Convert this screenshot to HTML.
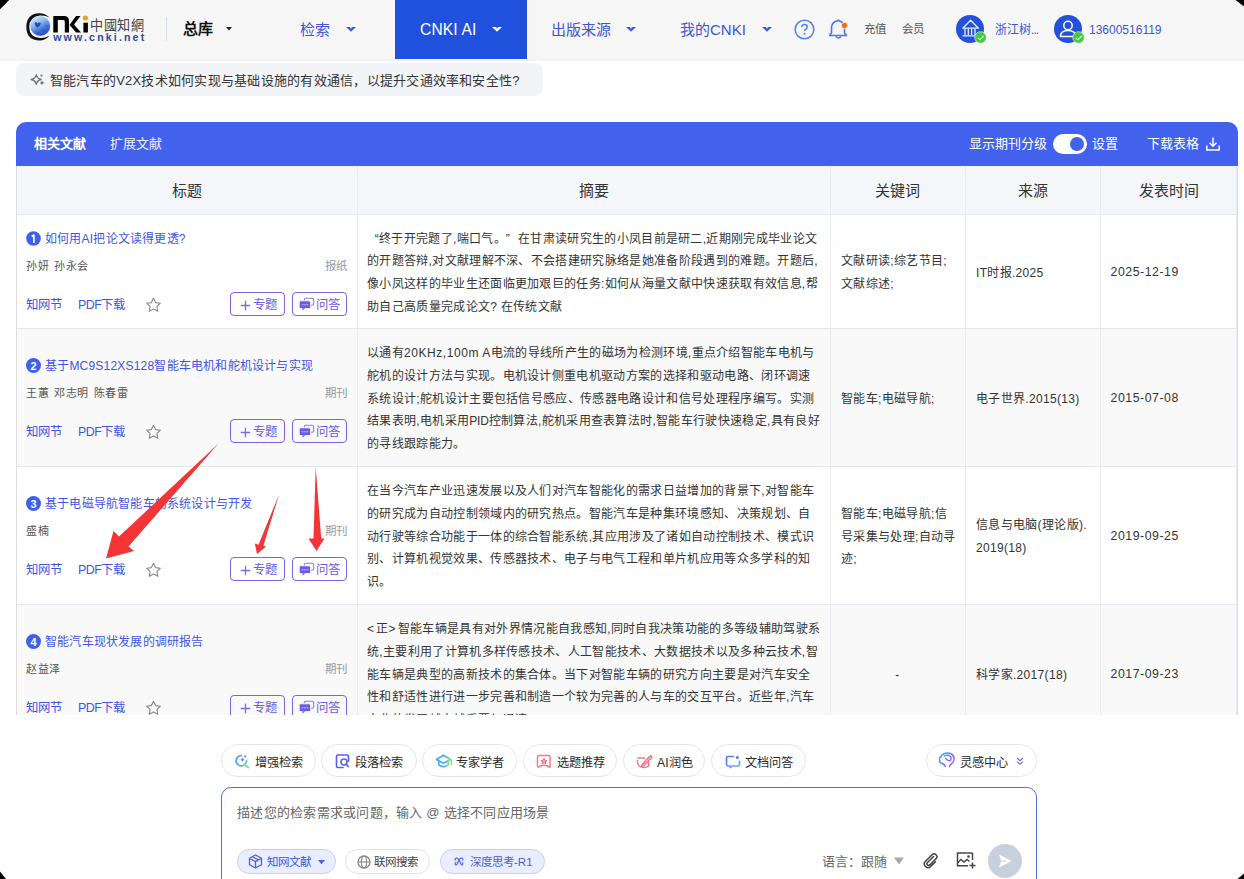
<!DOCTYPE html>
<html lang="zh-CN">
<head>
<meta charset="utf-8">
<style>
*{box-sizing:border-box;margin:0;padding:0}
html,body{width:1244px;height:879px;overflow:hidden;background:#fff}
body{position:relative;font-family:"Liberation Sans",sans-serif;color:#333}
.a{position:absolute;white-space:nowrap}
.hdr{position:absolute;left:0;top:0;width:1244px;height:59px;background:#f6f6f6;border-bottom:0}
.nav{position:absolute;top:19.5px;height:20px;line-height:20px;font-size:15px;color:#3d55d6}
.chev{position:absolute;width:10px;height:5px}
.corner{position:absolute;width:9px;height:9px}

.row{position:absolute;left:16px;width:1221px;border-bottom:1px solid #e4e7ee}
.badge{width:15px;height:15px;border-radius:50%;background:#4060ea;color:#fff;font-size:11px;font-weight:bold;line-height:16px;text-align:center;font-family:"Liberation Sans",sans-serif}
.ttl{height:20px;line-height:20px;font-size:12px;letter-spacing:0.2px;color:#4055e4}
.au{height:20px;line-height:21px;font-size:11px;letter-spacing:0.5px;word-spacing:1.5px;color:#555}
.typ{height:20px;line-height:20px;font-size:11.5px;color:#999}
.lnk{height:20px;line-height:20px;font-size:12.4px;color:#4055e4}
.btn{width:55px;height:24px;border:1px solid #7565e8;border-radius:4px;font-size:12.4px;line-height:22px;color:#6b5ce6}
.btn .pl{font-size:15px;margin-right:3px;margin-left:1px;line-height:20px}
.btn .qa{margin-right:3px;margin-left:-2px}
.abs{font-size:12px;letter-spacing:0.32px;line-height:22.7px;color:#333}
.lq{display:inline-block;width:12px;text-align:right}
.rq{display:inline-block;width:8.5px;text-align:left}
.th{position:absolute;top:167px;height:48px;line-height:48px;font-size:15px;color:#333;text-align:center}
.vl{position:absolute;top:166px;width:1px;height:560px;background:#e9ebf1}
.tool{position:absolute;top:744px;height:33px;border:1px solid #e3e6ef;border-radius:17px;background:#fff;font-size:12.2px;font-weight:500;color:#2a2a2a;line-height:31px;white-space:nowrap}
.tool svg{position:absolute;top:9px}
.tool span{position:absolute;top:2.5px}
.chip{position:absolute;top:849px;height:25px;border-radius:12.5px;font-size:11.5px;line-height:23px;white-space:nowrap}
.chip svg{position:absolute;top:5px}
.chip span{position:absolute;top:1px}
</style>
</head>
<body>
<!-- header -->
<div class="hdr"></div>
<div class="a" style="left:0;top:59px;width:1244px;height:2px;background:#f1f3f6"></div>

<!-- logo -->
<svg class="a" style="left:0;top:0" width="160" height="50" viewBox="0 0 160 50">
  <defs>
    <linearGradient id="gl" x1="0.2" y1="0" x2="0.7" y2="1">
      <stop offset="0" stop-color="#d6ecfd"/>
      <stop offset="0.35" stop-color="#8cc0ee"/>
      <stop offset="0.7" stop-color="#3f6fd8"/>
      <stop offset="1" stop-color="#2a44b8"/>
    </linearGradient>
  </defs>
  <path d="M49.5 17.5 Q45 13 39 13.2 Q26.5 13.8 26.3 27 Q26.5 40.2 39.5 40.5 Q45.5 40.5 49.5 35.5 Q45 38.2 40 38 Q29.5 37.5 29.2 27 Q29.5 17 39.5 15.5 Q45 15 49.5 17.5Z" fill="#111"/>
  <circle cx="40.2" cy="26" r="10" fill="url(#gl)"/>
  <path d="M34.6 22.6 q1.6 -1 3 0.8 q1.8 -1.6 3.4 0 q-1 2.6 -4 4.4 q-2.6 -2.2 -2.4 -5.2z" fill="#203cae" opacity="0.9"/><circle cx="44" cy="31" r="1.2" fill="#2d4fc8" opacity="0.7"/><circle cx="38" cy="33" r="1.4" fill="#2d4fc8" opacity="0.6"/><circle cx="46.5" cy="26" r="1" fill="#2d4fc8" opacity="0.6"/>
  <path d="M53.3 16 H64 Q69 16 69 21 V32.5 H64.8 V21.5 Q64.8 20 63.3 20 H57.8 V32.5 H53.3Z" fill="#000"/>
  <path d="M80.5 16 H76 L69.5 25 L76.2 32.5 H81 L74 24.5Z" fill="#000"/>
  <rect x="83.4" y="22.7" width="4.5" height="9.8" fill="#000"/>
  <circle cx="85.4" cy="18" r="2.6" fill="#f0a01a"/>
  <text x="90" y="29.5" font-family="Liberation Sans" font-size="13.6" fill="#444" textLength="54" lengthAdjust="spacingAndGlyphs">中國知網</text>
  <text x="53.2" y="41" font-family="Liberation Sans" font-weight="bold" font-size="10.6" fill="#2b4aa6" textLength="91" lengthAdjust="spacing">www.cnki.net</text>
</svg>

<div class="a" style="left:166px;top:17px;width:1px;height:24px;background:#d5def3"></div>
<div class="a" style="left:183px;top:19px;height:20px;line-height:20px;font-size:15px;font-weight:bold;color:#111">总库</div>
<svg class="a" style="left:226px;top:27px" width="6" height="4"><path d="M0 0h6l-3 3.5z" fill="#222"/></svg>

<div class="nav a" style="left:300px">检索</div>
<svg class="chev a" style="left:345.6px;top:27px" viewBox="0 0 10 5"><path d="M0 0 H4 L5 1.7 L6 0 H10 L5 4.7 Z" fill="#3d5ce0"/></svg>

<div class="a" style="left:395px;top:0;width:132px;height:59px;background:#2051dc"></div>
<div class="nav a" style="left:420px;color:#fff;font-size:15.6px;letter-spacing:0.15px">CNKI AI</div>
<svg class="chev a" style="left:491.6px;top:27px" viewBox="0 0 10 5"><path d="M0 0 H4 L5 1.7 L6 0 H10 L5 4.7 Z" fill="#fff"/></svg>

<div class="nav a" style="left:551px">出版来源</div>
<svg class="chev a" style="left:625.6px;top:27px" viewBox="0 0 10 5"><path d="M0 0 H4 L5 1.7 L6 0 H10 L5 4.7 Z" fill="#3d5ce0"/></svg>

<div class="nav a" style="left:680px">我的CNKI</div>
<svg class="chev a" style="left:761.6px;top:27px" viewBox="0 0 10 5"><path d="M0 0 H4 L5 1.7 L6 0 H10 L5 4.7 Z" fill="#3d5ce0"/></svg>

<!-- help icon -->
<svg class="a" style="left:794px;top:19px" width="21" height="21" viewBox="0 0 21 21">
  <circle cx="10.5" cy="10.5" r="9.3" fill="none" stroke="#5a82f0" stroke-width="1.6"/>
  <path d="M7.8 8.3 q0 -2.8 2.7 -2.8 q2.7 0 2.7 2.5 q0 1.6 -1.6 2.3 q-1.1 0.5 -1.1 1.8" fill="none" stroke="#5a82f0" stroke-width="1.6"/>
  <circle cx="10.5" cy="14.8" r="1" fill="#5a82f0"/>
</svg>
<!-- bell -->
<svg class="a" style="left:829px;top:19px" width="20" height="21" viewBox="0 0 20 21">
  <path d="M8.5 2 q1 -1.2 2 0 q5 1.5 5 7 v5 l2 2.5 h-17 l2 -2.5 v-5 q0 -5.5 5 -7z" fill="none" stroke="#4d74ef" stroke-width="1.6" stroke-linejoin="round"/>
  <path d="M7 17.5 q2.5 3 5 0" fill="none" stroke="#4d74ef" stroke-width="1.6"/>
  <circle cx="15.5" cy="6.5" r="3.2" fill="#f26b1d" stroke="#f5f5f5" stroke-width="0.8"/>
</svg>
<div class="a" style="left:864px;top:21px;height:16px;line-height:16px;font-size:11.5px;color:#555">充值</div>
<div class="a" style="left:902px;top:21px;height:16px;line-height:16px;font-size:11.5px;color:#555">会员</div>

<!-- avatar 1 -->
<svg class="a" style="left:956px;top:15px" width="32" height="30" viewBox="0 0 32 30">
  <circle cx="14" cy="14" r="14" fill="#2451dc"/>
  <path d="M6.8 13.2 L14.6 5.2 L22.4 13.2 Z" fill="none" stroke="#e8eeff" stroke-width="1.3" stroke-linejoin="round"/>
  <path d="M9 13.5v6.5M12.3 13.5v6.5M15.6 13.5v6.5M19 13.5v6.5M6.5 20.8h14.5" stroke="#e8eeff" stroke-width="1.3"/>
  <circle cx="24.5" cy="22.5" r="5.8" fill="#45c83f" stroke="#f6f6f6" stroke-width="0.6"/>
  <path d="M21.8 22.8 l2.2 2 l3.6 -3.8" fill="none" stroke="#e8ffe8" stroke-width="1.1"/>
</svg>
<div class="a" style="left:995px;top:22px;height:16px;line-height:16px;font-size:12px;color:#3e55d2">浙江树<span style="letter-spacing:-0.9px">...</span></div>
<!-- avatar 2 -->
<svg class="a" style="left:1054px;top:15px" width="32" height="30" viewBox="0 0 32 30">
  <circle cx="14" cy="14" r="14" fill="#2451dc"/>
  <circle cx="14" cy="10.5" r="4.2" fill="none" stroke="#fff" stroke-width="1.5"/>
  <path d="M6.5 21.5 q0 -6 7.5 -6 q7.5 0 7.5 6z" fill="none" stroke="#fff" stroke-width="1.5" stroke-linejoin="round"/>
  <circle cx="24.5" cy="22.5" r="5.8" fill="#45c83f" stroke="#f6f6f6" stroke-width="0.6"/>
  <path d="M21.8 22.8 l2.2 2 l3.6 -3.8" fill="none" stroke="#e8ffe8" stroke-width="1.1"/>
</svg>
<div class="a" style="left:1089px;top:22px;height:16px;line-height:16px;font-size:12px;color:#3e55d2">13600516119</div>


<!-- query bubble -->
<div class="a" style="left:16px;top:63px;width:527px;height:33px;background:#f3f4f8;border-radius:8px"></div>
<svg class="a" style="left:26px;top:68px" width="24" height="22" viewBox="0 0 24 22">
  <path d="M10.26 6.6 Q11.1 10.7 15.3 11.5 Q11.1 12.3 10.26 16.4 Q9.4 12.3 5.2 11.5 Q9.4 10.7 10.26 6.6Z" fill="none" stroke="#6f7378" stroke-width="1.3" stroke-linejoin="round"/>
  <circle cx="15.4" cy="7.6" r="1.15" fill="#777"/><circle cx="16" cy="14.8" r="1.6" fill="#777"/>
</svg>
<div class="a" style="left:50px;top:70.5px;height:20px;line-height:20px;font-size:13px;letter-spacing:0.24px;color:#333">智能汽车的V2X技术如何实现与基础设施的有效通信，以提升交通效率和安全性?</div>

<!-- table -->
<div class="a" style="left:0;top:0;width:1244px;height:715px;overflow:hidden">
<div class="a" style="left:16px;top:122px;width:1222px;height:44px;background:#4262ee;border-radius:10px 10px 0 0"></div>
<div class="a" style="left:34px;top:134px;height:20px;line-height:20px;font-size:13px;font-weight:bold;color:#fff">相关文献</div>
<div class="a" style="left:110px;top:134px;height:20px;line-height:20px;font-size:13px;color:#eef">扩展文献</div>
<div class="a" style="left:969px;top:134px;height:20px;line-height:20px;font-size:13px;color:#fff">显示期刊分级</div>
<div class="a" style="left:1053px;top:134px;width:34px;height:20px;border-radius:10px;background:#fff"></div>
<div class="a" style="left:1070px;top:137px;width:14px;height:14px;border-radius:50%;background:#4262ee"></div>
<div class="a" style="left:1092px;top:134px;height:20px;line-height:20px;font-size:13px;color:#fff">设置</div>
<div class="a" style="left:1147px;top:134px;height:20px;line-height:20px;font-size:13px;color:#fff">下载表格</div>
<svg class="a" style="left:1205px;top:136px" width="16" height="16" viewBox="0 0 16 16">
  <path d="M8 1.5 v8.5 M4.5 6.8 L8 10.2 L11.5 6.8" fill="none" stroke="#fff" stroke-width="1.5"/>
  <path d="M1.8 9.5 v4.5 h12.4 v-4.5" fill="none" stroke="#fff" stroke-width="1.5"/>
</svg>
<div class="a" style="left:16px;top:166px;width:1222px;height:49px;background:#f4f6fa;border-bottom:1px solid #e4e7ee"></div>
<div class="th" style="left:16px;width:341px">标题</div>
<div class="th" style="left:357px;width:473px">摘要</div>
<div class="th" style="left:830px;width:135px">关键词</div>
<div class="th" style="left:965px;width:135px">来源</div>
<div class="th" style="left:1100px;width:138px">发表时间</div>
<div class="row" style="top:215px;height:114px;background:#fff"></div>
<svg class="a" style="left:26px;top:231px" width="15" height="15" viewBox="0 0 15 15"><circle cx="7.5" cy="7.5" r="7.3" fill="#4060ea"/><path d="M5.7 5.5 L7.9 4 V11.9" fill="none" stroke="#fff" stroke-width="1.6" stroke-linejoin="round"/></svg>
<div class="ttl a" style="left:45px;top:229.0px">如何用AI把论文读得更透?</div>
<div class="au a" style="left:26px;top:256.0px">孙妍 孙永会</div>
<div class="typ a" style="right:897px;top:256.0px">报纸</div>
<div class="lnk a" style="left:26px;top:295.2px">知网节</div>
<div class="lnk a" style="left:78px;top:295.2px;letter-spacing:-0.5px">PDF下载</div>
<svg class="a star" style="left:145px;top:297.0px" width="17" height="16" viewBox="0 0 17 16"><path d="M8.5 1.2 L10.6 5.6 L15.4 6.2 L11.9 9.5 L12.8 14.3 L8.5 12 L4.2 14.3 L5.1 9.5 L1.6 6.2 L6.4 5.6 Z" fill="none" stroke="#8a8a8a" stroke-width="1.1" stroke-linejoin="round"/></svg>
<div class="btn a" style="left:230px;top:292.3px"><svg style="position:absolute;left:8.5px;top:6.5px" width="11" height="11" viewBox="0 0 11 11"><path d="M5.5 0.8 V10.2 M0.8 5.5 H10.2" stroke="#7a6be8" stroke-width="1.3"/></svg><span style="position:absolute;left:22px;top:0.5px">专题</span></div>
<div class="btn a" style="left:292px;top:292.3px"><svg style="position:absolute;left:5px;top:3.7px" width="17" height="15" viewBox="0 0 17 15"><rect x="6.3" y="1.2" width="9.4" height="7" rx="1.5" fill="none" stroke="#8a7cf0" stroke-width="1.1"/><rect x="1.2" y="3.8" width="11.4" height="7.8" rx="1.4" fill="#6b5ce6" stroke="#fff" stroke-width="0.9"/><path d="M4.2 11.2 L4.8 13.6 L7.2 11.2Z" fill="#6b5ce6"/><rect x="3.8" y="7.2" width="1.6" height="1.1" fill="#cfc8ff"/><rect x="6.2" y="7.2" width="1.6" height="1.1" fill="#cfc8ff"/><rect x="8.6" y="7.2" width="1.6" height="1.1" fill="#cfc8ff"/></svg><span style="position:absolute;left:22.5px;top:0.5px">问答</span></div>
<div class="abs a" style="left:367px;top:227.6px"><span class="lq">“</span>终于开完题了,喘口气。<span class="rq">”</span> 在甘肃读研究生的小凤目前是研二,近期刚完成毕业论文<br>的开题答辩,对文献理解不深、不会搭建研究脉络是她准备阶段遇到的难题。开题后,<br>像小凤这样的毕业生还面临更加艰巨的任务:如何从海量文献中快速获取有效信息,帮<br>助自己高质量完成论文? 在传统文献</div>
<div class="abs a" style="left:841px;top:250.3px">文献研读;综艺节目;<br>文献综述;</div>
<div class="abs a" style="left:976px;top:261.6px">IT时报.2025</div>
<div class="abs a" style="left:1110.5px;top:260.6px;letter-spacing:0.55px;font-size:12.3px">2025-12-19</div>
<div class="row" style="top:329px;height:138px;background:#f9f9f9"></div>
<div class="badge a" style="left:26px;top:358.2px">2</div>
<div class="ttl a" style="left:45px;top:355.7px">基于MC9S12XS128智能车电机和舵机设计与实现</div>
<div class="au a" style="left:26px;top:382.7px">王蕙 邓志明 陈春雷</div>
<div class="typ a" style="right:897px;top:382.7px">期刊</div>
<div class="lnk a" style="left:26px;top:421.9px">知网节</div>
<div class="lnk a" style="left:78px;top:421.9px;letter-spacing:-0.5px">PDF下载</div>
<svg class="a star" style="left:145px;top:423.7px" width="17" height="16" viewBox="0 0 17 16"><path d="M8.5 1.2 L10.6 5.6 L15.4 6.2 L11.9 9.5 L12.8 14.3 L8.5 12 L4.2 14.3 L5.1 9.5 L1.6 6.2 L6.4 5.6 Z" fill="none" stroke="#8a8a8a" stroke-width="1.1" stroke-linejoin="round"/></svg>
<div class="btn a" style="left:230px;top:419.0px"><svg style="position:absolute;left:8.5px;top:6.5px" width="11" height="11" viewBox="0 0 11 11"><path d="M5.5 0.8 V10.2 M0.8 5.5 H10.2" stroke="#7a6be8" stroke-width="1.3"/></svg><span style="position:absolute;left:22px;top:0.5px">专题</span></div>
<div class="btn a" style="left:292px;top:419.0px"><svg style="position:absolute;left:5px;top:3.7px" width="17" height="15" viewBox="0 0 17 15"><rect x="6.3" y="1.2" width="9.4" height="7" rx="1.5" fill="none" stroke="#8a7cf0" stroke-width="1.1"/><rect x="1.2" y="3.8" width="11.4" height="7.8" rx="1.4" fill="#6b5ce6" stroke="#fff" stroke-width="0.9"/><path d="M4.2 11.2 L4.8 13.6 L7.2 11.2Z" fill="#6b5ce6"/><rect x="3.8" y="7.2" width="1.6" height="1.1" fill="#cfc8ff"/><rect x="6.2" y="7.2" width="1.6" height="1.1" fill="#cfc8ff"/><rect x="8.6" y="7.2" width="1.6" height="1.1" fill="#cfc8ff"/></svg><span style="position:absolute;left:22.5px;top:0.5px">问答</span></div>
<div class="abs a" style="left:367px;top:342.2px">以通有<span style="letter-spacing:0.56px">20KHz,100m A</span>电流的导线所产生的磁场为检测环境,重点介绍智能车电机与<br>舵机的设计方法与实现。电机设计侧重电机驱动方案的选择和驱动电路、闭环调速<br>系统设计;舵机设计主要包括信号感应、传感器电路设计和信号处理程序编写。实测<br>结果表明,电机采用<span style="letter-spacing:-0.2px">PID</span>控制算法,舵机采用查表算法时,智能车行驶快速稳定,具有良好<br>的寻线跟踪能力。</div>
<div class="abs a" style="left:841px;top:387.6px">智能车;电磁导航;</div>
<div class="abs a" style="left:976px;top:387.6px">电子世界.2015(13)</div>
<div class="abs a" style="left:1110.5px;top:386.6px;letter-spacing:0.55px;font-size:12.3px">2015-07-08</div>
<div class="row" style="top:467px;height:138px;background:#fff"></div>
<div class="badge a" style="left:26px;top:496.2px">3</div>
<div class="ttl a" style="left:45px;top:493.7px">基于电磁导航智能车的系统设计与开发</div>
<div class="au a" style="left:26px;top:520.7px">盛楠</div>
<div class="typ a" style="right:897px;top:520.7px">期刊</div>
<div class="lnk a" style="left:26px;top:559.9px">知网节</div>
<div class="lnk a" style="left:78px;top:559.9px;letter-spacing:-0.5px">PDF下载</div>
<svg class="a star" style="left:145px;top:561.7px" width="17" height="16" viewBox="0 0 17 16"><path d="M8.5 1.2 L10.6 5.6 L15.4 6.2 L11.9 9.5 L12.8 14.3 L8.5 12 L4.2 14.3 L5.1 9.5 L1.6 6.2 L6.4 5.6 Z" fill="none" stroke="#8a8a8a" stroke-width="1.1" stroke-linejoin="round"/></svg>
<div class="btn a" style="left:230px;top:557.0px"><svg style="position:absolute;left:8.5px;top:6.5px" width="11" height="11" viewBox="0 0 11 11"><path d="M5.5 0.8 V10.2 M0.8 5.5 H10.2" stroke="#7a6be8" stroke-width="1.3"/></svg><span style="position:absolute;left:22px;top:0.5px">专题</span></div>
<div class="btn a" style="left:292px;top:557.0px"><svg style="position:absolute;left:5px;top:3.7px" width="17" height="15" viewBox="0 0 17 15"><rect x="6.3" y="1.2" width="9.4" height="7" rx="1.5" fill="none" stroke="#8a7cf0" stroke-width="1.1"/><rect x="1.2" y="3.8" width="11.4" height="7.8" rx="1.4" fill="#6b5ce6" stroke="#fff" stroke-width="0.9"/><path d="M4.2 11.2 L4.8 13.6 L7.2 11.2Z" fill="#6b5ce6"/><rect x="3.8" y="7.2" width="1.6" height="1.1" fill="#cfc8ff"/><rect x="6.2" y="7.2" width="1.6" height="1.1" fill="#cfc8ff"/><rect x="8.6" y="7.2" width="1.6" height="1.1" fill="#cfc8ff"/></svg><span style="position:absolute;left:22.5px;top:0.5px">问答</span></div>
<div class="abs a" style="left:367px;top:480.2px">在当今汽车产业迅速发展以及人们对汽车智能化的需求日益增加的背景下,对智能车<br>的研究成为自动控制领域内的研究热点。智能汽车是种集环境感知、决策规划、自<br>动行驶等综合功能于一体的综合智能系统,其应用涉及了诸如自动控制技术、模式识<br>别、计算机视觉效果、传感器技术、电子与电气工程和单片机应用等众多学科的知<br>识。</div>
<div class="abs a" style="left:841px;top:502.9px">智能车;电磁导航;信<br>号采集与处理;自动寻<br>迹;</div>
<div class="abs a" style="left:976px;top:514.3px">信息与电脑(理论版).<br>2019(18)</div>
<div class="abs a" style="left:1110.5px;top:524.6px;letter-spacing:0.55px;font-size:12.3px">2019-09-25</div>
<div class="row" style="top:605px;height:138px;background:#f9f9f9"></div>
<div class="badge a" style="left:26px;top:634.2px">4</div>
<div class="ttl a" style="left:45px;top:631.7px">智能汽车现状发展的调研报告</div>
<div class="au a" style="left:26px;top:658.7px">赵益泽</div>
<div class="typ a" style="right:897px;top:658.7px">期刊</div>
<div class="lnk a" style="left:26px;top:697.9px">知网节</div>
<div class="lnk a" style="left:78px;top:697.9px;letter-spacing:-0.5px">PDF下载</div>
<svg class="a star" style="left:145px;top:699.7px" width="17" height="16" viewBox="0 0 17 16"><path d="M8.5 1.2 L10.6 5.6 L15.4 6.2 L11.9 9.5 L12.8 14.3 L8.5 12 L4.2 14.3 L5.1 9.5 L1.6 6.2 L6.4 5.6 Z" fill="none" stroke="#8a8a8a" stroke-width="1.1" stroke-linejoin="round"/></svg>
<div class="btn a" style="left:230px;top:695.0px"><svg style="position:absolute;left:8.5px;top:6.5px" width="11" height="11" viewBox="0 0 11 11"><path d="M5.5 0.8 V10.2 M0.8 5.5 H10.2" stroke="#7a6be8" stroke-width="1.3"/></svg><span style="position:absolute;left:22px;top:0.5px">专题</span></div>
<div class="btn a" style="left:292px;top:695.0px"><svg style="position:absolute;left:5px;top:3.7px" width="17" height="15" viewBox="0 0 17 15"><rect x="6.3" y="1.2" width="9.4" height="7" rx="1.5" fill="none" stroke="#8a7cf0" stroke-width="1.1"/><rect x="1.2" y="3.8" width="11.4" height="7.8" rx="1.4" fill="#6b5ce6" stroke="#fff" stroke-width="0.9"/><path d="M4.2 11.2 L4.8 13.6 L7.2 11.2Z" fill="#6b5ce6"/><rect x="3.8" y="7.2" width="1.6" height="1.1" fill="#cfc8ff"/><rect x="6.2" y="7.2" width="1.6" height="1.1" fill="#cfc8ff"/><rect x="8.6" y="7.2" width="1.6" height="1.1" fill="#cfc8ff"/></svg><span style="position:absolute;left:22.5px;top:0.5px">问答</span></div>
<div class="abs a" style="left:367px;top:618.2px"><span style="letter-spacing:2.2px">&lt;</span>正<span style="letter-spacing:2.2px">&gt;</span>智能车辆是具有对外界情况能自我感知,同时自我决策功能的多等级辅助驾驶系<br>统,主要利用了计算机多样传感技术、人工智能技术、大数据技术以及多种云技术,智<br>能车辆是典型的高新技术的集合体。当下对智能车辆的研究方向主要是对汽车安全<br>性和舒适性进行进一步完善和制造一个较为完善的人与车的交互平台。近些年,汽车<br>产业的发展越来越重要与迅速</div>
<div class="abs a" style="left:830px;width:135px;text-align:center;top:663.6px">-</div>
<div class="abs a" style="left:976px;top:663.6px">科学家.2017(18)</div>
<div class="abs a" style="left:1110.5px;top:662.6px;letter-spacing:0.55px;font-size:12.3px">2017-09-23</div>
<div class="vl" style="left:357px"></div>
<div class="vl" style="left:830px"></div>
<div class="vl" style="left:965px"></div>
<div class="vl" style="left:1100px"></div>
<div class="vl" style="left:1236px;background:#e6eaf4"></div>
<div class="a" style="left:16px;top:166px;width:1px;height:560px;background:#dedede"></div>
<div class="a" style="left:1237px;top:166px;width:1px;height:560px;background:#dedede"></div>
</div>


<!-- bottom tools -->
<div class="tool" style="left:221px;width:95px">
  <svg style="left:9px;top:6px" width="24" height="22" viewBox="0 0 24 22">
    <defs><linearGradient id="g1" x1="0" y1="0" x2="1" y2="1"><stop offset="0" stop-color="#4f9cf5"/><stop offset="0.7" stop-color="#5ab0f0"/><stop offset="1" stop-color="#7ee08a"/></linearGradient></defs>
    <path d="M10.3 4.6 A5.2 5.2 0 1 0 15.5 9.8" fill="none" stroke="url(#g1)" stroke-width="1.8" stroke-linecap="round"/>
    <path d="M14.3 14.3 L17.3 16.6" stroke="#7edc8e" stroke-width="1.9" stroke-linecap="round"/>
    <path d="M11.5 6.5 Q11.9 8.4 13.6 8.8 Q11.9 9.2 11.5 11.1 Q11.1 9.2 9.4 8.8 Q11.1 8.4 11.5 6.5Z" fill="#3f8ef2"/>
    <circle cx="14.2" cy="5.3" r="1.15" fill="#4f9cf5"/>
  </svg>
  <span style="left:33px">增强检索</span>
</div>
<div class="tool" style="left:321px;width:96px">
  <svg style="left:9px;top:6px" width="24" height="22" viewBox="0 0 24 22">
    <path d="M12 16.5 H7 Q5.5 16.5 5.5 15 V5.5 Q5.5 4 7 4 H16 Q17.5 4 17.5 5.5 V10.3" fill="none" stroke="#5563ee" stroke-width="1.6" stroke-linecap="round"/>
    <circle cx="13" cy="11" r="3" fill="none" stroke="#5563ee" stroke-width="1.6"/>
    <path d="M15.2 13.3 L17.2 15.6" stroke="#5e5cea" stroke-width="1.6" stroke-linecap="round"/>
  </svg>
  <span style="left:33px">段落检索</span>
</div>
<div class="tool" style="left:422px;width:95px">
  <svg style="left:10px;top:6px" width="24" height="22" viewBox="0 0 24 22">
    <defs><linearGradient id="g3" x1="0" y1="0" x2="1" y2="0"><stop offset="0" stop-color="#45a6f5"/><stop offset="0.6" stop-color="#4aa8ee"/><stop offset="1" stop-color="#7fdc8a"/></linearGradient></defs>
    <path d="M10.5 4.3 L17.6 8.5 L10.5 12.2 L3.4 8.5 Z" fill="none" stroke="url(#g3)" stroke-width="1.6" stroke-linejoin="round"/>
    <path d="M5.8 10.3 V13.8 Q10.5 17.6 15.2 13.8 V10.6" fill="none" stroke="url(#g3)" stroke-width="1.6" stroke-linejoin="round"/>
    <path d="M18.3 9 V13.5" stroke="#7fdc8a" stroke-width="1.5" stroke-linecap="round"/>
  </svg>
  <span style="left:33px">专家学者</span>
</div>
<div class="tool" style="left:523px;width:94px">
  <svg style="left:9px;top:6px" width="24" height="22" viewBox="0 0 24 22">
    <path d="M5.5 4.5 H16 Q17 4.5 17 5.5 V16.2 L14.5 15 Q11 13.4 7.5 15 L5.5 16.2 Q4.5 16.2 4.5 15.2 V5.5 Q4.5 4.5 5.5 4.5Z" fill="none" stroke="#f47d8c" stroke-width="1.5" stroke-linejoin="round"/>
    <path d="M11 7.6 L11.8 9.3 L13.6 9.5 L12.3 10.7 L12.6 12.5 L11 11.6 L9.4 12.5 L9.7 10.7 L8.4 9.5 L10.2 9.3Z" fill="none" stroke="#f36d82" stroke-width="1.2" stroke-linejoin="round"/>
  </svg>
  <span style="left:33px">选题推荐</span>
</div>
<div class="tool" style="left:623px;width:82px">
  <svg style="left:7px;top:6px" width="24" height="22" viewBox="0 0 24 22">
    <defs><linearGradient id="g5" x1="0" y1="1" x2="1" y2="0"><stop offset="0" stop-color="#f27fa8"/><stop offset="1" stop-color="#f56a76"/></linearGradient></defs>
    <path d="M6.5 9.5 Q6 15.8 12 16.5 Q15.8 16.9 17.5 15 V10.5" fill="none" stroke="url(#g5)" stroke-width="1.5" stroke-linecap="round"/>
    <path d="M6.8 7 H13.8" fill="none" stroke="#f47a8a" stroke-width="1.5" stroke-linecap="round"/>
    <path d="M11.2 13.5 L18.8 5.2 Q19.7 4.3 20.4 5 Q21.1 5.8 20.2 6.7 L12.6 14.8 L10.6 15.4Z" fill="none" stroke="#f47080" stroke-width="1.4" stroke-linejoin="round"/>
  </svg>
  <span style="left:33px">AI润色</span>
</div>
<div class="tool" style="left:711px;width:95px">
  <svg style="left:9px;top:6px" width="24" height="22" viewBox="0 0 24 22">
    <defs><linearGradient id="g6" x1="0" y1="0" x2="1" y2="1"><stop offset="0" stop-color="#5576f2"/><stop offset="1" stop-color="#62b6f6"/></linearGradient></defs>
    <path d="M12.3 5.5 H7 Q5.5 5.5 5.5 7 V13.5 Q5.5 15 7 15 H8.5 L9.5 16.5 L11 15 H17 Q18.5 15 18.5 13.5 V10.3" fill="none" stroke="url(#g6)" stroke-width="1.7" stroke-linecap="round" stroke-linejoin="round"/>
    <circle cx="16.4" cy="6.5" r="1.5" fill="#4f7cf2"/>
  </svg>
  <span style="left:33px">文档问答</span>
</div>
<div class="tool" style="left:926px;width:111px">
  <svg style="left:9px;top:5px" width="22" height="22" viewBox="0 0 22 22">
    <defs><linearGradient id="g7" x1="0" y1="0" x2="1" y2="1"><stop offset="0" stop-color="#3fb0f8"/><stop offset="0.55" stop-color="#7f72f2"/><stop offset="1" stop-color="#c65ae8"/></linearGradient></defs>
    <path d="M9.2 16.3 Q8.5 13.8 5.5 13.2 Q3.6 12.9 3.8 11.2 L3.5 8.8 Q3.4 7.6 4.6 7.2 Q5.3 4.6 8.2 3.6 Q12 2.6 15 3.8 Q18.2 5.4 18 9.5 Q17.7 12.2 15.6 13.6 Q13.6 15 13.6 16.6" fill="none" stroke="url(#g7)" stroke-width="1.6" stroke-linecap="round" stroke-linejoin="round"/>
    <path d="M8.2 6 Q11 4.6 14 6.2 Q15.8 7.5 15 9.5 Q14 11 12.3 10.6 Q10.5 10.2 9.5 8.2" fill="none" stroke="url(#g7)" stroke-width="1.5" stroke-linecap="round"/>
  </svg>
  <span style="left:33px">灵感中心</span>
  <svg style="left:89px;top:12px" width="8" height="9" viewBox="0 0 8 9">
    <path d="M1 1 L4 3.6 L7 1 M1 4.6 L4 7.2 L7 4.6" fill="none" stroke="#6672c8" stroke-width="1.2"/>
  </svg>
</div>

<!-- input box -->
<div class="a" style="left:221px;top:787px;width:816px;height:120px;border:1px solid #4f6ff0;border-radius:10px;background:#fff"></div>
<div class="a" style="left:237px;top:803px;height:20px;line-height:20px;font-size:13px;letter-spacing:0.25px;color:#666">描述您的检索需求或问题，输入 @ 选择不同应用场景</div>

<div class="chip" style="left:237px;width:99px;background:#e9edfd;border:1px solid #c4cff6;color:#3f55d8">
  <svg style="left:10px;top:4px" width="15" height="15" viewBox="0 0 15 15">
    <path d="M7.5 1 L13.5 4.3 V10.7 L7.5 14 L1.5 10.7 V4.3 Z M1.5 4.3 L7.5 7.6 L13.5 4.3 M7.5 7.6 V14 M4.5 2.6 L10.5 6" fill="none" stroke="#4a62e0" stroke-width="1.3" stroke-linejoin="round"/>
  </svg>
  <span style="left:29px">知网文献</span>
  <svg style="left:80px;top:10px" width="7" height="5" viewBox="0 0 7 5"><path d="M0 0 H7 L3.5 4.2Z" fill="#4a62e0"/></svg>
</div>
<div class="chip" style="left:345px;width:85px;background:#fff;border:1px solid #dfe2ea;color:#444">
  <svg style="left:11px;top:5px" width="14" height="14" viewBox="0 0 14 14">
    <circle cx="7" cy="7" r="6" fill="none" stroke="#888" stroke-width="1.3"/>
    <path d="M1 7 H13" fill="none" stroke="#888" stroke-width="1.1"/><ellipse cx="7" cy="7" rx="2.6" ry="6" fill="none" stroke="#888" stroke-width="1.1"/>
  </svg>
  <span style="left:28px">联网搜索</span>
</div>
<div class="chip" style="left:440px;width:105px;background:#e9edfd;border:1px solid #c4cff6;color:#4a5fd8">
  <svg style="left:12px;top:6px" width="12" height="12" viewBox="0 0 12 12">
    <path d="M2.2 4 Q2 1.6 4.2 2.2 Q5.6 2.8 6.6 5 L7.6 7.5 Q8.6 9.6 9.6 8.6 Q10.4 7.6 9.2 6.6" fill="none" stroke="#5670e6" stroke-width="1.3" stroke-linecap="round"/>
    <path d="M9.8 4 Q10 1.6 7.8 2.2 Q6.4 2.8 5.4 5 L4.4 7.5 Q3.4 9.6 2.4 8.6 Q1.6 7.6 2.8 6.6" fill="none" stroke="#5670e6" stroke-width="1.3" stroke-linecap="round"/>
  </svg>
  <span style="left:29px">深度思考-R1</span>
</div>

<div class="a" style="left:822px;top:852px;height:20px;line-height:20px;font-size:13px;color:#666">语言：跟随</div>
<svg class="a" style="left:894px;top:857px" width="10" height="8" viewBox="0 0 10 8"><path d="M0 0.5 H10 L5 7.5Z" fill="#aaa"/></svg>
<svg class="a" style="left:922px;top:852px" width="17" height="17" viewBox="0 0 17 17">
  <path d="M11.5 4.5 L5.5 10.5 Q4.3 11.7 5.5 12.9 Q6.7 14.1 7.9 12.9 L14 6.8 Q16 4.8 14 2.8 Q12 0.8 10 2.8 L3.5 9.3 Q0.9 11.9 3.5 14.5 Q6.1 17.1 8.7 14.5 L13.5 9.7" fill="none" stroke="#444" stroke-width="1.5" stroke-linecap="round"/>
</svg>
<svg class="a" style="left:956px;top:852px" width="20" height="17" viewBox="0 0 20 17">
  <path d="M10.5 1 H1.5 V13.8 H12" fill="none" stroke="#444" stroke-width="1.5"/>
  <path d="M16.5 1 V8" fill="none" stroke="#444" stroke-width="1.5"/>
  <path d="M10.5 1 H16.5" fill="none" stroke="#444" stroke-width="1.5"/>
  <path d="M1.5 11 L5 7.5 L8 10 L11 7.5 L13.5 9.5" fill="none" stroke="#444" stroke-width="1.4"/>
  <circle cx="12.5" cy="4.5" r="1.3" fill="#444"/>
  <path d="M16.5 10.5 V16.5 M13.5 13.5 H19.5" stroke="#444" stroke-width="1.5"/>
</svg>
<div class="a" style="left:988px;top:844px;width:34px;height:34px;border-radius:50%;background:#c9d0dd"></div>
<svg class="a" style="left:996px;top:852px" width="18" height="18" viewBox="0 0 18 18">
  <path d="M3 2.5 L15.5 9 L3 15.5 L5.3 9 Z" fill="#fff"/>
  <path d="M5.3 9 H10" stroke="#c9d0dd" stroke-width="1.2"/>
</svg>

<!-- red arrows -->
<svg class="a" style="left:0;top:0" width="1244" height="879" viewBox="0 0 1244 879">
  <path d="M218.5 443.5 L128.5 546.5 L134 551 L106 558.5 L113.5 531 L119 536.5 Z" fill="#f43535"/>
  <path d="M279 494.5 L263.5 545.5 L265.8 546.8 L257 554 L254.8 543.5 L258.5 544.8 Z" fill="#f43535"/>
  <path d="M315.7 467 L321.2 538.5 L324.5 538.5 L316.5 551 L308.5 538.5 L313.5 538.5 Z" fill="#f43535"/>
</svg>

<!-- corners -->
<svg class="a" style="left:0;top:0" width="1244" height="879" viewBox="0 0 1244 879">
  <path d="M0 0 H9.2 L0 9.2Z" fill="#000"/>
  <path d="M1244 0 H1235.5 L1244 6.5Z" fill="#000"/>
  <path d="M0 871.5 L6 879 H0Z" fill="#000"/>
  <path d="M1244 873.5 L1237.5 879 H1244Z" fill="#000"/>
</svg>
</body>
</html>
